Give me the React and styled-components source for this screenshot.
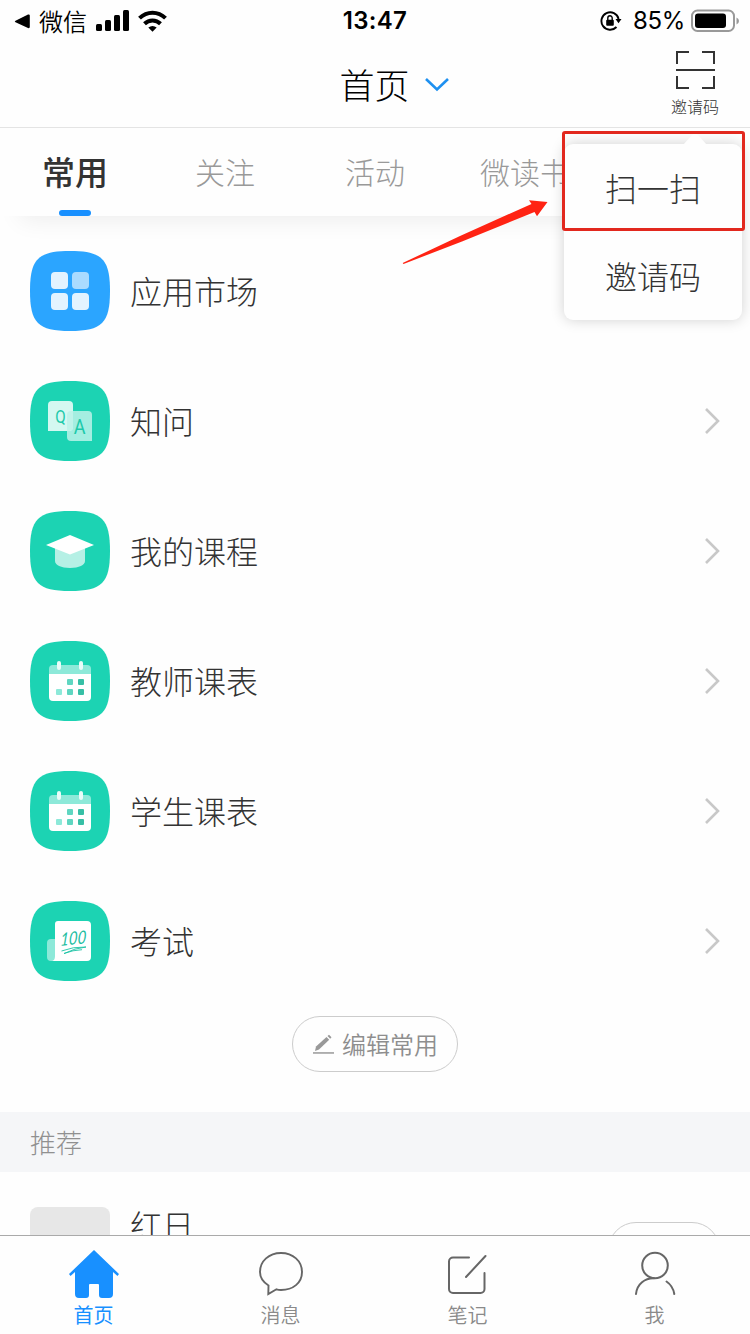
import React, { Component } from "react";
import styled, { createGlobalStyle, css } from "styled-components";

const GlobalStyle = createGlobalStyle`
  * {
    box-sizing: border-box;
  }
  body {
    margin: 0;
    background: #fefefe;
    font-family: "Noto Sans CJK SC", sans-serif;
    font-weight: 300;
  }
  svg {
    display: block;
    flex: none;
  }
`;

const Screen = styled.div`
  position: relative;
  display: flex;
  flex-direction: column;
  width: 750px;
  height: 1334px;
  overflow: hidden;
  background: #fefefe;
  color: #333;
`;

const StatusBar = styled.div`
  display: grid;
  grid-template-columns: 1fr auto 1fr;
  align-items: center;
  flex: none;
  height: 40px;
  padding: 0 11px 0 14px;
  color: #000;
`;

const StatusSide = styled.div`
  display: flex;
  align-items: center;
  justify-content: ${props => (props.$end ? "flex-end" : "flex-start")};
`;

const BackApp = styled.span`
  margin: 0 9px 0 9px;
  font-size: 24px;
  font-weight: 350;
  line-height: 40px;
`;

const Clock = styled.span`
  margin-right: 3px;
  font: 600 24px/42px Inter, sans-serif;
  letter-spacing: 0.3px;
`;

const Percent = styled.span`
  margin: 0 6px 0 11px;
  font: 400 24px/42px Inter, sans-serif;
  letter-spacing: -0.3px;
`;

const Header = styled.header`
  display: grid;
  grid-template-columns: 1fr auto 1fr;
  flex: none;
  height: 88px;
  border-bottom: 1px solid #e4e4e4;
`;

const Title = styled.div`
  grid-column: 2;
  display: flex;
  align-items: center;
  gap: 15px;
  padding-left: 38px;
  color: #000;
  font-size: 35px;
  line-height: 86px;
`;

const InviteButton = styled.div`
  justify-self: end;
  display: flex;
  flex-direction: column;
  align-items: center;
  gap: 4px;
  padding: 10px 31px 0 0;
  font-size: 16px;
  line-height: 24px;
`;

const Tabs = styled.nav`
  display: flex;
  flex: none;
  height: 88px;
  background: #fefefe;
  box-shadow: 0 24px 24px -20px rgba(0, 0, 0, 0.07);
`;

const Tab = styled.div`
  display: flex;
  flex-direction: column;
  align-items: center;
  justify-content: space-between;
  width: 150px;
  color: #999;
  font-size: 30px;
  line-height: 86px;
  ${props => props.$active && css`
    color: #333;
    font-size: 33px;
    font-weight: 500;
    &::after {
      content: "";
      width: 32px;
      height: 6px;
      margin-top: -6px;
      border-radius: 3px;
      background: #1890ff;
    }
  `}
`;

const AppList = styled.main`
  flex: none;
  padding-top: 10px;
`;

const Row = styled.div`
  display: flex;
  align-items: center;
  gap: 20px;
  height: 130px;
  padding: 0 30px;
`;

const RowName = styled.span`
  flex: 1;
  padding-bottom: 2px;
  font-size: 32px;
  line-height: 48px;
`;

const EditButton = styled.button`
  display: flex;
  align-items: center;
  flex: none;
  align-self: center;
  gap: 8px;
  width: 166px;
  height: 56px;
  margin: 10px 0 40px;
  padding: 0 0 0 20px;
  border: 1px solid #ccc;
  border-radius: 28px;
  background: none;
  color: #8e8e8e;
  font: inherit;
  font-size: 24px;
  font-weight: 350;
  line-height: 52px;
`;

const SectionTitle = styled.div`
  flex: none;
  height: 60px;
  padding-left: 30px;
  background: #f5f6f8;
  color: #909090;
  font-size: 26px;
  line-height: 60px;
`;

const Recommend = styled.div`
  display: flex;
  align-items: flex-start;
  flex: 1;
  min-height: 0;
  gap: 20px;
  padding: 35px 30px 0;
  overflow: hidden;
`;

const Cover = styled.div`
  width: 80px;
  height: 80px;
  border-radius: 8px;
  background: #e7e7e7;
`;

const RecommendName = styled.span`
  flex: 1;
  font-size: 32px;
  line-height: 34px;
`;

const AddButton = styled.div`
  width: 112px;
  height: 56px;
  margin-top: 15px;
  border: 1px solid #ccc;
  border-radius: 28px;
`;

const TabBar = styled.footer`
  display: flex;
  flex: none;
  height: 99px;
  padding-right: 2px;
  border-top: 1px solid #aaa;
  background: #fefefe;
`;

const TabBarItem = styled.div`
  display: flex;
  flex-direction: column;
  align-items: center;
  flex: 1;
  padding-top: 12px;
  color: ${props => (props.$active ? "#1890ff" : "#8a8a8a")};
  font-size: 20px;
  font-weight: ${props => (props.$active ? 400 : 350)};
  line-height: 33px;
`;

const Menu = styled.div`
  position: absolute;
  top: 144px;
  left: 564px;
  width: 178px;
  border-radius: 9px;
  background: #fefefe;
  box-shadow: 0 0 14px rgba(0, 0, 0, 0.18);
`;

const MenuTip = styled.svg`
  position: absolute;
  top: -11px;
  left: 117px;
`;

const MenuItem = styled.div`
  height: 88px;
  font-size: 32px;
  line-height: 87px;
  text-align: center;
`;

const Highlight = styled.div`
  position: absolute;
  top: 131px;
  left: 562px;
  width: 183px;
  height: 100px;
  border: 3px solid #e2281e;
  border-radius: 3px;
`;

const Pointer = styled.svg`
  position: absolute;
  top: 195px;
  left: 400px;
`;

const Tile = ({ color, children }) => (
  <svg width="80" height="80" viewBox="0 0 80 80">
    <path
      d="M40 0C72 0 80 8 80 40C80 72 72 80 40 80C8 80 0 72 0 40C0 8 8 0 40 0Z"
      fill={color}
    />
    {children}
  </svg>
);

const MarketIcon = () => (
  <Tile color="#2ba5ff">
    <g fill="#fff" fillOpacity="0.87">
      <rect x="21" y="21" width="17" height="17" rx="4" />
      <rect x="42" y="21" width="17" height="17" rx="4" fillOpacity="0.6" />
      <rect x="21" y="42" width="17" height="17" rx="4" />
      <rect x="42" y="42" width="17" height="17" rx="4" />
    </g>
  </Tile>
);

const QuestionIcon = () => (
  <Tile color="#1cd3b3">
    <path d="M41 30H58a4 4 0 0 1 4 4V60H41a4 4 0 0 1-4-4V34a4 4 0 0 1 4-4Z" fill="#a4eee1" />
    <path d="M22 20H39a4 4 0 0 1 4 4V46a4 4 0 0 1-4 4H18V24a4 4 0 0 1 4-4Z" fill="#d4f8f1" />
    <path d="M37 34a4 4 0 0 1 4-4H43V46a4 4 0 0 1-4 4H37Z" fill="#c0f3ea" />
    <g fill="#1cc9aa" fontFamily="Roboto, sans-serif" fontWeight="400" textAnchor="middle">
      <text transform="translate(30.5 41.500) scale(.8 1)" fontSize="19">Q</text>
      <text transform="translate(49.500 53) scale(.9 1)" fontSize="20">A</text>
    </g>
  </Tile>
);

const CourseIcon = () => (
  <Tile color="#1cd3b3">
    <path d="M25 35H55V50C55 54 49 57 40 57S25 54 25 50Z" fill="#b5f0e5" />
    <path d="M40 24L64 34L40 43.500L16 34Z" fill="#fff" />
  </Tile>
);

const CalendarIcon = () => (
  <Tile color="#1cd3b3">
    <path d="M19 33V28a4 4 0 0 1 4-4H57a4 4 0 0 1 4 4V33Z" fill="#8de9d9" />
    <path d="M19 33H61V56a4 4 0 0 1-4 4H23a4 4 0 0 1-4-4Z" fill="#fff" />
    <rect x="27" y="20" width="4" height="9" rx="2" fill="#e9fcf9" />
    <rect x="49" y="20" width="4" height="9" rx="2" fill="#e9fcf9" />
    <rect x="37" y="38" width="6" height="6" rx="1" fill="#5fd6c1" />
    <rect x="48" y="38" width="6" height="6" rx="1" fill="#37bfa6" />
    <rect x="26" y="48" width="6" height="6" rx="1" fill="#8de9d9" />
    <rect x="37" y="48" width="6" height="6" rx="1" fill="#5fd6c1" />
    <rect x="48" y="48" width="6" height="6" rx="1" fill="#37bfa6" />
  </Tile>
);

const ExamIcon = () => (
  <Tile color="#1cd3b3">
    <path d="M21 38H29V60H21a4 4 0 0 1-4-4V42a4 4 0 0 1 4-4Z" fill="#8de9d9" />
    <path d="M28 20H57a4 4 0 0 1 4 4V56a4 4 0 0 1-4 4H21C24 60 25 58 25 55V23a3 3 0 0 1 3-3Z" fill="#fff" />
    <text
      transform="translate(30 45) rotate(-6) skewX(-10)"
      fill="#1cbd9f"
      fontFamily="Lato, sans-serif"
      fontStyle="italic"
      fontWeight="400"
      fontSize="18"
      textLength="26"
      lengthAdjust="spacingAndGlyphs"
    >
      100
    </text>
    <path d="M31.500 50Q43 45.500 56 46Q45 47 34 52.500Q43 49 52 48.700" fill="none" stroke="#1cc3a5" strokeWidth="0.9" />
  </Tile>
);

const Arrow = () => (
  <svg width="16" height="28" viewBox="0 0 16 28" fill="none" stroke="#c8c8c8" strokeWidth="2.6">
    <path d="M2 2L14 14L2 26" />
  </svg>
);

const HomeIcon = () => (
  <svg width="52" height="50" viewBox="0 0 52 50" fill="#1890ff">
    <path d="M26 2L51 26L49.500 28L45 24V46a4 4 0 0 1-4 4H34a3 3 0 0 1-3-3V37a1 1 0 0 0-1-1H22a1 1 0 0 0-1 1V47a3 3 0 0 1-3 3H11a4 4 0 0 1-4-4V24L2.500 28L1 26Z" />
  </svg>
);

const MessageIcon = () => (
  <svg width="52" height="50" viewBox="0 0 52 50" fill="none" stroke="#666" strokeWidth="1.9">
    <path d="M13.500 37.500C8 34 5 29 5 24C5 13 14 5 26 5S47 13 47 24S38 42 26 42Q23.500 42 21.500 41.300L13.300 46Z" />
  </svg>
);

const NoteIcon = () => (
  <svg width="52" height="50" viewBox="0 0 52 50" fill="none" stroke="#666" strokeWidth="2" strokeLinecap="round">
    <path d="M27 9.500H11a4 4 0 0 0-4 4V41a4 4 0 0 0 4 4H38.500a4 4 0 0 0 4-4V25M24 29L43.500 8" />
  </svg>
);

const UserIcon = () => (
  <svg width="52" height="50" viewBox="0 0 52 50" fill="none" stroke="#666" strokeWidth="2" strokeLinecap="round">
    <circle cx="26" cy="17.500" r="12.800" />
    <path d="M7 46C8 36 16 30 25 30.300M37.500 33.500Q44 38 45.300 46" />
  </svg>
);

const apps = [
  { name: "应用市场", icon: MarketIcon },
  { name: "知问", icon: QuestionIcon, arrow: true },
  { name: "我的课程", icon: CourseIcon, arrow: true },
  { name: "教师课表", icon: CalendarIcon, arrow: true },
  { name: "学生课表", icon: CalendarIcon, arrow: true },
  { name: "考试", icon: ExamIcon, arrow: true }
];

const footer = [
  { name: "首页", icon: HomeIcon },
  { name: "消息", icon: MessageIcon },
  { name: "笔记", icon: NoteIcon },
  { name: "我", icon: UserIcon }
];

const Status = () => (
  <StatusBar>
    <StatusSide>
      <svg width="16" height="16" viewBox="0 0 16 16">
        <path d="M1.500 7.800L14 1.500Q15.800 1 15.800 2.500V14Q15.800 15.500 14 15L1.500 9.200Q0 8.500 1.500 7.800Z" />
      </svg>
      <BackApp>微信</BackApp>
      <svg width="34" height="24" viewBox="0 0 34 24">
        <rect x="0" y="15" width="6" height="7" rx="1.500" />
        <rect x="9" y="11" width="6" height="11" rx="1.500" />
        <rect x="18" y="6" width="6" height="16" rx="1.500" />
        <rect x="27" y="1" width="6" height="21" rx="1.500" />
      </svg>
      <svg width="38" height="22" viewBox="-8 0 38 22" fill="none" stroke="#000" strokeWidth="4">
        <path d="M1.500 8.200C9 .8 20 .8 27.500 8.200" />
        <path d="M6.500 13.700C11 9.300 18 9.300 22.500 13.700" />
        <path d="M14.500 21.800L10.300 17.500Q14.500 14.500 18.700 17.500Z" fill="#000" stroke="none" />
      </svg>
    </StatusSide>
    <Clock>13:47</Clock>
    <StatusSide $end>
      <svg width="22" height="20" viewBox="0 0 22 20">
        <path d="M18.600 8A8.700 8.700 0 1 0 16.500 16" fill="none" stroke="#000" strokeWidth="1.900" />
        <path d="M15.500 8H21.500L18.500 12.200Z" />
        <rect x="6.200" y="8.800" width="7.600" height="6" rx="1" />
        <path d="M7.800 9V7a2.200 2.200 0 0 1 4.400 0V9" fill="none" stroke="#000" strokeWidth="1.400" />
      </svg>
      <Percent>85%</Percent>
      <svg width="48" height="24" viewBox="0 0 48 24">
        <rect x="1" y="1.500" width="42" height="20.500" rx="5.500" fill="none" stroke="#999" strokeWidth="2" />
        <rect x="4" y="4.500" width="31" height="14.500" rx="3" />
        <path d="M45.500 8.500Q48 9.500 48 12T45.500 15.500Z" fill="#999" />
      </svg>
    </StatusSide>
  </StatusBar>
);

class App extends Component {
  constructor(props) {
    super(props);

    this.state = {
      tab: "常用",
      page: "首页"
    };
  }

  render() {
    const { tab, page } = this.state;

    return (
      <Screen>
        <GlobalStyle />
        <Status />
        <Header>
          <Title>
            首页
            <svg width="24" height="16" viewBox="0 0 24 16" fill="none" stroke="#1e90f0" strokeWidth="2.6">
              <path d="M1 3L12 13.500L23 3" />
            </svg>
          </Title>
          <InviteButton>
            <svg width="40" height="40" viewBox="0 0 40 40" fill="none" stroke="#333" strokeWidth="2">
              <path d="M2 14V2H14M27 2H39V14M2 26V38H14M27 38H39V26M1 20H40" />
            </svg>
            邀请码
          </InviteButton>
        </Header>
        <Tabs>
          {["常用", "关注", "活动", "微读书"].map(name => (
            <Tab key={name} $active={name === tab}>{name}</Tab>
          ))}
        </Tabs>
        <AppList>
          {apps.map(({ name, icon: Icon, arrow }) => (
            <Row key={name}>
              <Icon />
              <RowName>{name}</RowName>
              {arrow && <Arrow />}
            </Row>
          ))}
        </AppList>
        <EditButton>
          <svg width="21" height="20" viewBox="0 0 21 20" fill="#999">
            <path d="M2 17L3 12.500L13.500 3L16.200 5.800L6 15.500Z" />
            <path d="M14.500 2L16 .8L18.500 3.300L17.200 4.800Z" />
            <rect x="0" y="18.200" width="21" height="1.500" />
          </svg>
          编辑常用
        </EditButton>
        <SectionTitle>推荐</SectionTitle>
        <Recommend>
          <Cover />
          <RecommendName>红日</RecommendName>
          <AddButton />
        </Recommend>
        <TabBar>
          {footer.map(({ name, icon: Icon }) => (
            <TabBarItem key={name} $active={name === page}>
              <Icon />
              {name}
            </TabBarItem>
          ))}
        </TabBar>
        <Menu>
          <MenuTip width="28" height="12" viewBox="0 0 28 12">
            <path d="M2 12L11 2Q14 -1 17 2L26 12Z" fill="#fefefe" />
          </MenuTip>
          <MenuItem>扫一扫</MenuItem>
          <MenuItem>邀请码</MenuItem>
        </Menu>
        <Highlight />
        <Pointer width="150" height="72" viewBox="400 195 150 72">
          <path
            d="M402.700 263L460 236L531.500 204L529 200.300L547.500 202L537 216.200L534.500 212L462 241.500L403.500 264Z"
            fill="#ff2313"
          />
        </Pointer>
      </Screen>
    );
  }
}

export default App;
